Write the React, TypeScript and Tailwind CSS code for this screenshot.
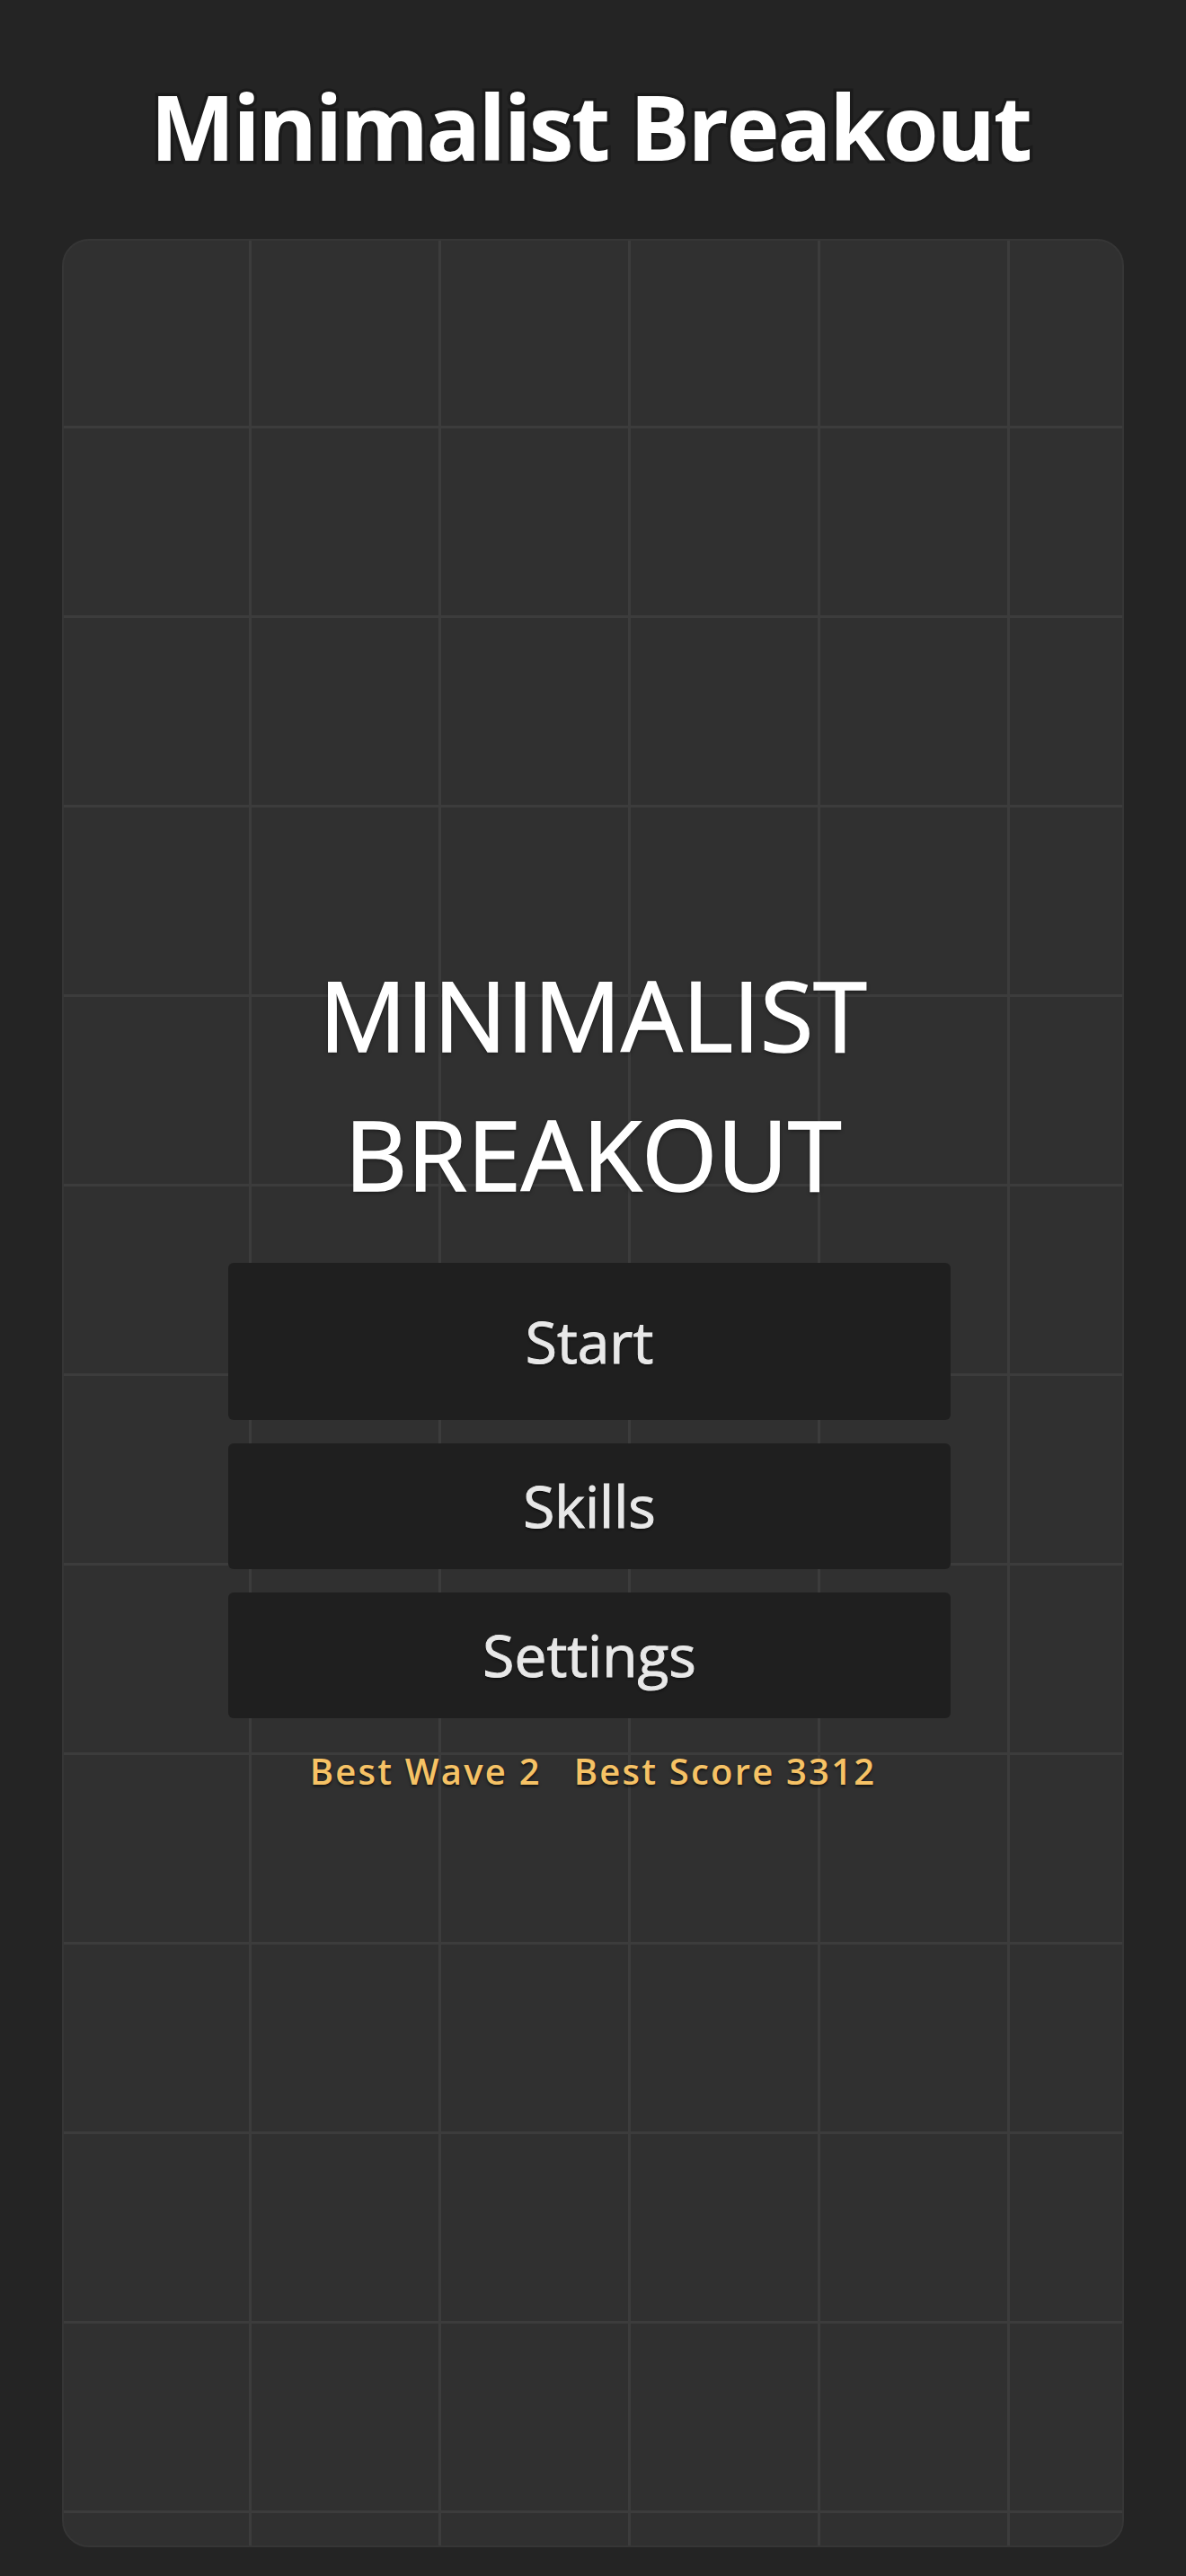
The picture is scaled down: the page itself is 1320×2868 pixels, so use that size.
import { useState } from "react";

type MenuItem = {
  label: string;
  tall?: boolean;
};

const items: MenuItem[] = [
  { label: "Start", tall: true },
  { label: "Skills" },
  { label: "Settings" },
];

function MenuButton({ item }: { item: MenuItem }) {
  return (
    <button
      className={`w-[804px] rounded-[6px] bg-[#1f1f1f] text-[64px] text-[#e8e8e8] [-webkit-text-stroke:1px_#e8e8e8] [text-shadow:0_2px_3px_rgba(0,0,0,0.6)] ${
        item.tall ? "h-[175px]" : "h-[140px]"
      }`}
    >
      {item.label}
    </button>
  );
}

function App() {
  const [best] = useState({ wave: 2, score: 3312 });

  return (
    <div className="min-h-screen bg-[#242424] font-['Open_Sans',sans-serif] pb-[32px]">
      <h1 className="pt-[90px] h-[266px] pr-[6px] text-center text-[100px] leading-[100px] font-bold tracking-[-2.4px] text-white [-webkit-text-stroke:7px_#1b1b1b] [paint-order:stroke_fill]">
        Minimalist Breakout
      </h1>

      {/* game board with its grid behind the menu */}
      <div className="mx-[69px] h-[2570px] rounded-[30px] border-2 border-[#363636] bg-[#303030] bg-[linear-gradient(to_right,transparent_206px,#3c3c3c_206px,#3c3c3c_209px,transparent_209px),linear-gradient(to_bottom,transparent_206px,#3c3c3c_206px,#3c3c3c_209px,transparent_209px)] bg-[length:211px_211px]">
        <div className="flex flex-col items-center px-10 pt-[784px]">
          <h2 className="text-center text-[108px] leading-[155px] text-white [-webkit-text-stroke:1.5px_white] [text-shadow:0_2px_4px_rgba(0,0,0,0.5)]">
            MINIMALIST BREAKOUT
          </h2>

          <div className="mt-[44px] pr-[8px] flex flex-col items-center gap-[26px]">
            {items.map((item) => (
              <MenuButton key={item.label} item={item} />
            ))}
          </div>

          <div className="mt-[30px] flex gap-[36px] text-[40px] leading-[58px] font-semibold tracking-[2.2px] text-[#f6c265] [text-shadow:0_2px_3px_rgba(0,0,0,0.6)]">
            <span>Best Wave {best.wave}</span>
            <span>Best Score {best.score}</span>
          </div>
        </div>
      </div>
    </div>
  );
}

export default App;
